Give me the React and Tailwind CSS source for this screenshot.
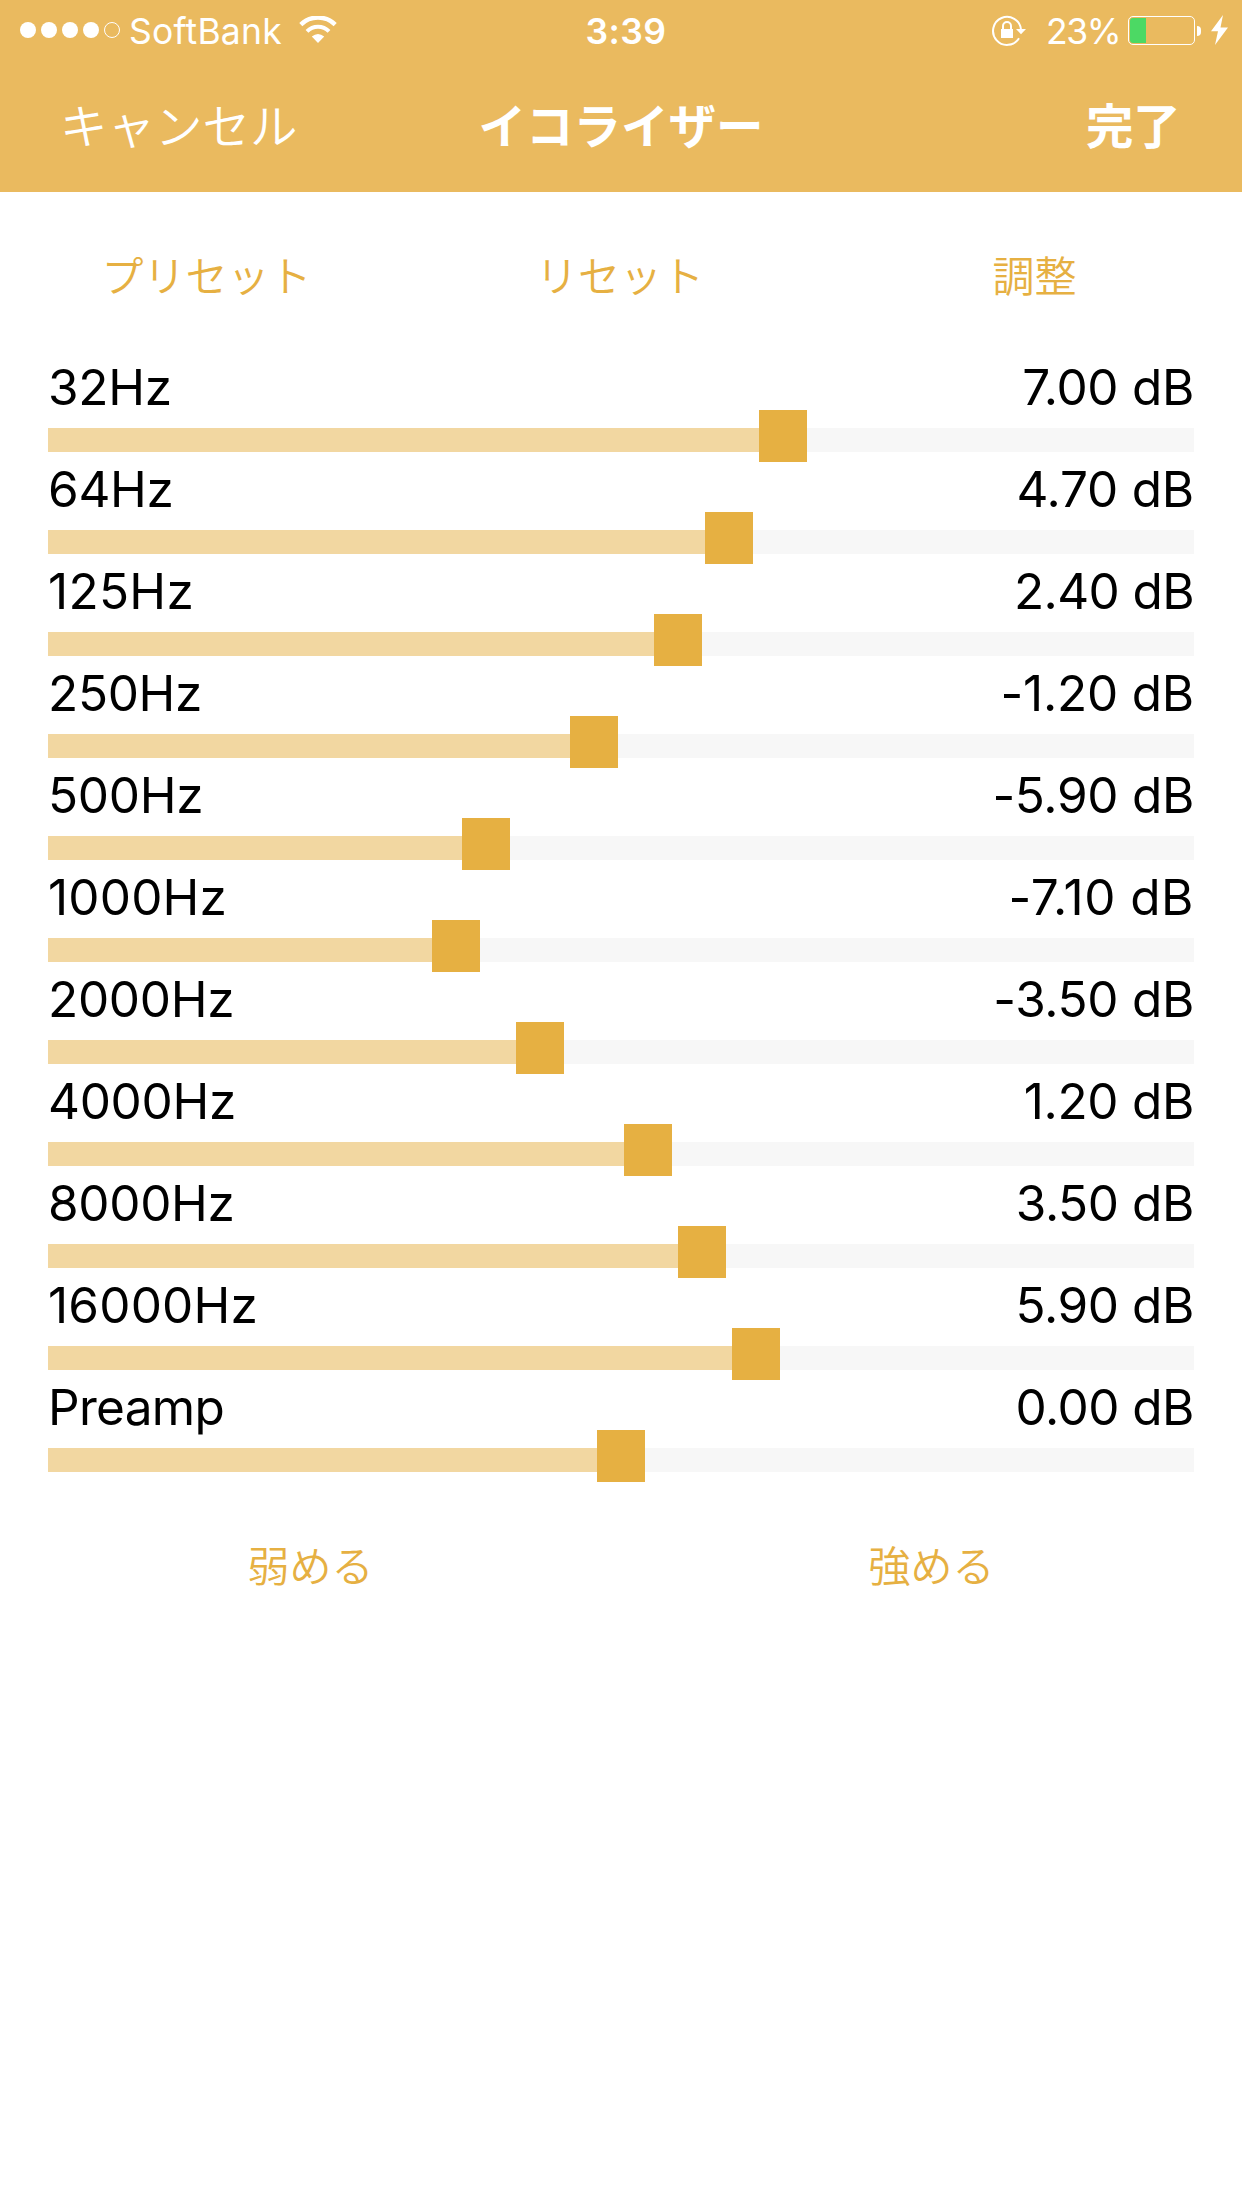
const BANDS = [
  { label: "32Hz", value: "7.00 dB", pos: 711, tracking: "tracking-[-0.3px]" },
  { label: "64Hz", value: "4.70 dB", pos: 657, tracking: "tracking-[-0.2px]" },
  { label: "125Hz", value: "2.40 dB", pos: 606, tracking: "tracking-[-0.6px]", labelTracking: "tracking-[0.3px]" },
  { label: "250Hz", value: "-1.20 dB", pos: 522, tracking: "tracking-[-0.2px]" },
  { label: "500Hz", value: "-5.90 dB", pos: 414, tracking: "tracking-[-0.3px]" },
  { label: "1000Hz", value: "-7.10 dB", pos: 384, tracking: "tracking-[0.5px]", labelTracking: "tracking-[0.2px]" },
  { label: "2000Hz", value: "-3.50 dB", pos: 468, tracking: "tracking-[-0.3px]" },
  { label: "4000Hz", value: "1.20 dB", pos: 576, tracking: "tracking-[-0.3px]" },
  { label: "8000Hz", value: "3.50 dB", pos: 630, tracking: "tracking-[-0.4px]" },
  { label: "16000Hz", value: "5.90 dB", pos: 684, tracking: "tracking-[-0.4px]", labelTracking: "tracking-[0.2px]" },
  { label: "Preamp", value: "0.00 dB", pos: 549, tracking: "tracking-[-0.5px]", labelTracking: "tracking-[-0.7px]" },
];

function Wifi() {
  return (
    <svg className="ml-[17px] mt-4 h-[28px] w-[38px]" viewBox="0 0 38 28" fill="none">
      <path d="M1.8 8.6 A24.5 24.5 0 0 1 36.2 8.6" stroke="#fff" strokeWidth="4.4" />
      <path d="M8 15.4 A15.6 15.6 0 0 1 30 15.4" stroke="#fff" strokeWidth="4" />
      <path d="M12.8 20.6 Q19 15.4 25.2 20.6 L19 27 Z" fill="#fff" />
    </svg>
  );
}

function RotationLock() {
  return (
    <svg className="mt-[14px] h-8 w-[36px]" viewBox="0 0 36 32" fill="none">
      <path d="M27 24.2 A14 14 0 1 1 29 15.5" stroke="#fff" strokeWidth="2" />
      <path d="M24 15 H34 L29 20.2 Z" fill="#fff" />
      <rect x="9" y="15" width="12" height="9" fill="#fff" />
      <path d="M11 15.5 V12 A4 4 0 0 1 19 12 V15.5" stroke="#fff" strokeWidth="2" />
    </svg>
  );
}

function StatusBar() {
  return (
    <div className="grid h-[60px] grid-cols-3 items-start text-[35.5px] leading-[64px]">
      <div className="flex pl-5">
        <div className="mt-[22px] flex gap-[5px]">
          <i className="size-4 rounded-full bg-white" />
          <i className="size-4 rounded-full bg-white" />
          <i className="size-4 rounded-full bg-white" />
          <i className="size-4 rounded-full bg-white" />
          <i className="size-4 rounded-full border border-white" />
        </div>
        <span className="ml-[9px] whitespace-nowrap tracking-[0.2px]">SoftBank</span>
        <Wifi />
      </div>
      <div className="pl-[10px] text-center font-semibold tracking-[0.4px]">3:39</div>
      <div className="flex justify-end pr-[14px]">
        <RotationLock />
        <span className="ml-[18px] tracking-[-1.5px]">23%</span>
        <div className="ml-2 mt-4 flex h-[29px] w-[67px] rounded-[5px] border border-white p-px">
          <div className="w-4 rounded-l-[3px] bg-[#4cd964]" />
        </div>
        <div className="ml-[2px] mt-[26px] h-[10px] w-1 rounded-r-full bg-white" />
        <svg className="ml-[10px] mt-[15px] h-[30px] w-[17px]" viewBox="0 0 17 30" fill="#fff">
          <path d="M12 0 L0 16.2 H7 L4 30 L17 12.5 H9.5 Z" />
        </svg>
      </div>
    </div>
  );
}

function Band({ label, value, pos, tracking, labelTracking = "tracking-[-0.3px]" }) {
  return (
    <div className="h-[102px]">
      <div className="flex h-[58px] items-start justify-between text-[49.5px] leading-[54px]">
        <span className={labelTracking}>{label}</span>
        <span className={tracking}>{value}</span>
      </div>
      <div className="flex h-[44px]">
        <div className="mt-[10px] h-6 bg-[#f2d7a1]" style={{ width: pos }} />
        <div className="-mt-2 h-[52px] w-12 shrink-0 bg-[#e6b042]" />
        <div className="mt-[10px] h-6 flex-1 bg-[#f7f7f7]" />
      </div>
    </div>
  );
}

export default function App() {
  return (
    <div className="h-[2208px] w-[1242px] bg-white font-['Inter','Noto_Sans_CJK_JP',sans-serif] text-black">
      <header className="h-48 bg-[#eaba5f] text-white">
        <StatusBar />
        <div className="grid h-[132px] grid-cols-3 items-start pl-[60px] pr-[62px] font-['Noto_Sans_CJK_JP',sans-serif] text-[47.5px] leading-[127px]">
          <span className="font-[350]">キャンセル</span>
          <span className="pl-[2px] text-center font-bold">イコライザー</span>
          <span className="text-right font-bold tracking-[-0.5px]">完了</span>
        </div>
      </header>
      <nav className="flex h-[168px] font-['Noto_Sans_CJK_JP',sans-serif] text-[42px] font-[350] leading-[164px] text-[#e6b042]">
        <span className="w-[413px] text-center">プリセット</span>
        <span className="w-[414px] text-center">リセット</span>
        <span className="w-[415px] text-center">調整</span>
      </nav>
      <main className="px-12">
        {BANDS.map((b) => (
          <Band key={b.label} {...b} />
        ))}
      </main>
      <footer className="grid grid-cols-2 text-center font-['Noto_Sans_CJK_JP',sans-serif] text-[42px] font-[350] leading-[164px] text-[#e6b042]">
        <span>弱める</span>
        <span>強める</span>
      </footer>
    </div>
  );
}
